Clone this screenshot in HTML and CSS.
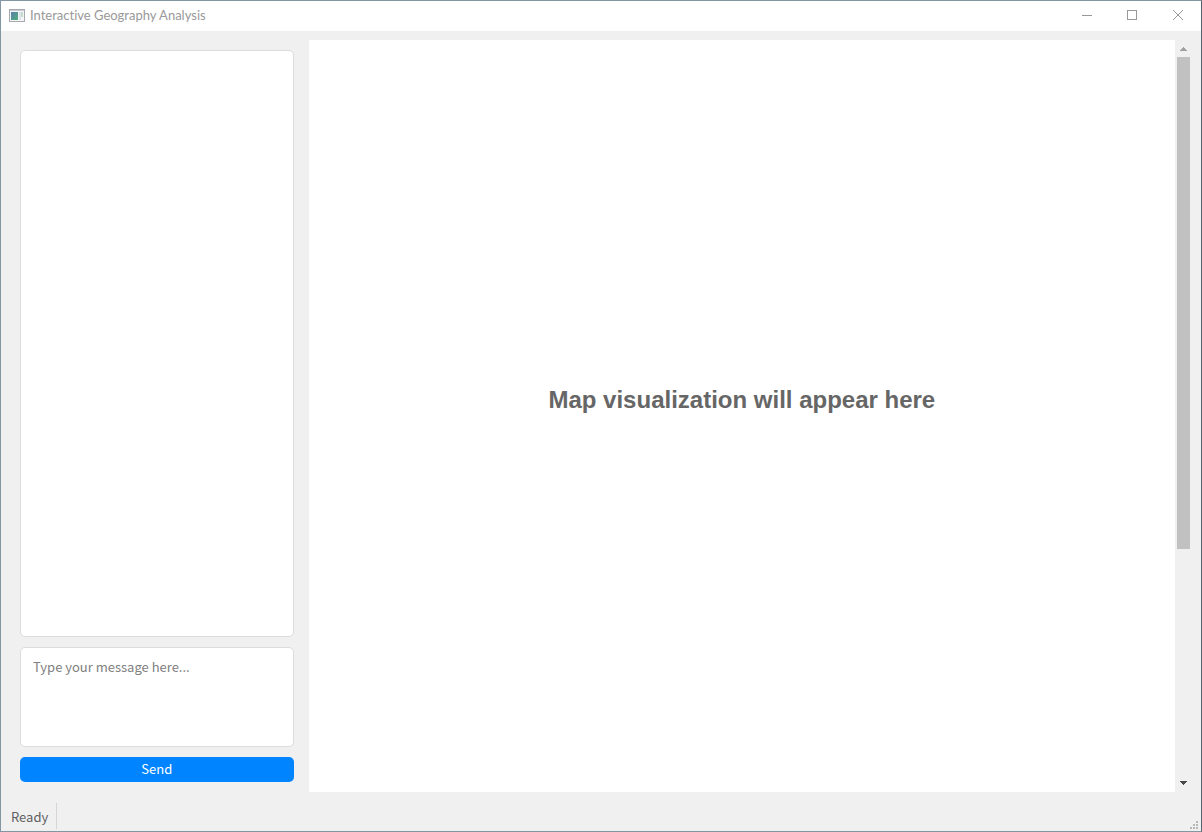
FILE: index.html
```html
<!DOCTYPE html>
<html lang="en">
<head>
<meta charset="utf-8">
<title>Interactive Geography Analysis</title>
<link rel="stylesheet" href="styles.css">
</head>
<body>
<div class="window">
  <header class="titlebar">
    <svg class="app-icon" width="16" height="14" viewBox="0 0 16 14" aria-hidden="true">
      <defs>
        <linearGradient id="pane" x1="0" y1="0" x2="1" y2="1">
          <stop offset="0" stop-color="#5a7fae"/>
          <stop offset="1" stop-color="#4fae78"/>
        </linearGradient>
      </defs>
      <rect x="0.5" y="1.5" width="15" height="12" fill="#f4f5f6" stroke="#a6a9ae"/>
      <path d="M1 2.5h14" stroke="#c8cbd0"/>
      <rect x="2" y="4" width="7" height="8" fill="url(#pane)"/>
      <rect x="10" y="4" width="2" height="8" fill="#dfe4ec"/>
      <rect x="12" y="4" width="2" height="5" fill="#c5dccb"/>
    </svg>
    <h1 class="title">Interactive Geography Analysis</h1>
    <div class="window-controls">
      <button class="window-button" type="button" aria-label="Minimize">
        <svg width="11" height="11" viewBox="0 0 11 11"><path d="M1 5.5h10"/></svg>
      </button>
      <button class="window-button" type="button" aria-label="Maximize">
        <svg width="11" height="11" viewBox="0 0 11 11"><path d="M.5 .5h9v9h-9z"/></svg>
      </button>
      <button class="window-button" type="button" aria-label="Close">
        <svg width="11" height="11" viewBox="0 0 11 11"><path d="M0 0l10 10M10 0l-10 10" shape-rendering="auto"/></svg>
      </button>
    </div>
  </header>
  <main class="workspace">
    <section class="chat">
      <div class="chat-log" role="log" aria-label="Conversation"></div>
      <textarea class="message" aria-label="Message" placeholder="Type your message here..."></textarea>
      <button class="send" type="button">Send</button>
    </section>
    <section class="map">
      <div class="map-view"><h2 class="map-hint">Map visualization will appear here</h2></div>
      <div class="scrollbar">
        <button class="scroll-button" type="button" aria-label="Scroll up">
          <svg width="7" height="4" viewBox="0 0 7 4"><path d="M3 0h1v1h1v1h1v1h1v1H0V3h1V2h1V1h1z" fill="#a0a0a0"/></svg>
        </button>
        <div class="scroll-track"><div class="scroll-thumb"></div></div>
        <button class="scroll-button" type="button" aria-label="Scroll down">
          <svg width="7" height="5" viewBox="0 0 7 5"><path d="M0 0h7v1H6v1H5v1H4v1H3V3H2V2H1V1H0z" fill="#484848"/></svg>
        </button>
      </div>
    </section>
  </main>
  <footer class="statusbar">
    <span class="status">Ready</span>
    <svg class="grip" width="8" height="8" viewBox="0 0 8 8" fill="#b8b8b8" aria-hidden="true"><path d="M6 0h2v2H6zM3 3h2v2H3zM6 3h2v2H6zM0 6h2v2H0zM3 6h2v2H3zM6 6h2v2H6z"/></svg>
  </footer>
</div>
</body>
</html>
```
FILE: styles.css
```css
* { box-sizing: border-box; }

body {
  margin: 0;
  font: 13px/20px "Noto Sans CJK SC", "Noto Sans", sans-serif;
  color: #606060;
}

button { padding: 0; border: 0; background: none; font: inherit; }
svg { display: block; }

.window {
  display: flex;
  flex-direction: column;
  height: 100vh;
  border: 1px solid #8496a0;
  border-right-color: #506773;
  background: #f0f0f0;
}

.titlebar {
  display: flex;
  align-items: center;
  gap: 5px;
  height: 30px;
  padding: 0 0 2px 8px;
  background: #fff;
}

.title {
  flex: 1;
  margin: 0;
  font: 13px/20px Lato, "Noto Sans", sans-serif;
  font-variant-ligatures: none;
  color: #999;
}

.window-controls { display: flex; }

.window-button {
  display: grid;
  place-items: center;
  width: 46px;
  height: 28px;
}

.window-button svg { fill: none; stroke: #999; shape-rendering: crispEdges; }

.workspace {
  flex: 1;
  display: flex;
  gap: 15px;
  min-height: 0;
  padding: 9px;
}

.chat {
  flex: 0 0 24%;
  display: flex;
  flex-direction: column;
  gap: 10px;
  padding: 10px 0 10px 10px;
}

.chat-log,
.message {
  border: 1px solid #dcdcdc;
  border-radius: 5px;
  background: #fff;
}

.chat-log { flex: 1; }

.message {
  display: block;
  width: 100%;
  height: 100px;
  padding: 9px 12px;
  font: inherit;
  resize: none;
}

.message::placeholder { color: #808080; }

.send {
  height: 25px;
  padding-bottom: 2px;
  border-radius: 5px;
  background: #0084ff;
  color: #fff;
}

.map { flex: 1; display: flex; }

.map-view {
  flex: 1;
  display: grid;
  place-items: center;
  padding-bottom: 32px;
  background: #fff;
}

.map-hint {
  margin: 0;
  font: bold 24px/28px "Liberation Sans", Arial, sans-serif;
  color: #666;
}

.scrollbar { display: flex; flex-direction: column; width: 17px; }

.scroll-button { display: grid; place-items: center; height: 17px; }

.scroll-track { flex: 1; padding: 0 2px; }

.scroll-thumb { width: 13px; height: 68.5%; background: #c1c1c1; }

.statusbar {
  display: flex;
  align-items: flex-end;
  justify-content: space-between;
  height: 30px;
  padding: 0 3px 2px 0;
}

.status {
  padding: 4px 8px 2px 10px;
  border-right: 1px solid #d5d5d5;
}
```
